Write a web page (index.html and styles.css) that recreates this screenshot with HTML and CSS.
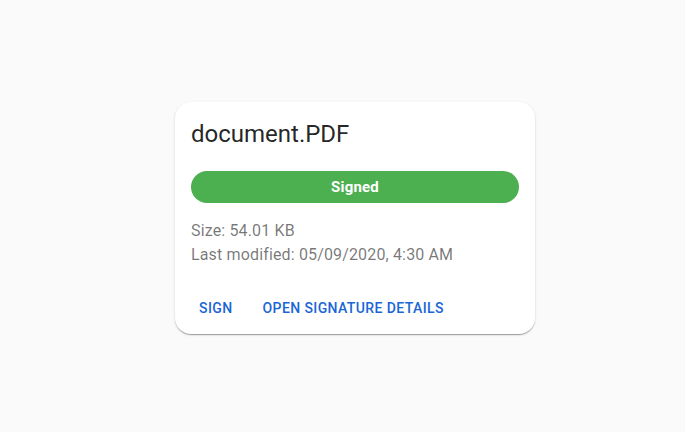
FILE: index.html
```html
<!DOCTYPE html>
<html>
<head>
<meta charset="utf-8">
<link rel="stylesheet" href="styles.css">
</head>
<body>
<div class="page">
  <div class="card">
    <div class="content">
      <h2 class="title">document.PDF</h2>
      <div class="chip">Signed</div>
      <div class="meta">
        <p>Size: 54.01 KB</p>
        <p>Last modified: 05/09/2020, 4:30 AM</p>
      </div>
    </div>
    <div class="actions">
      <button class="btn">Sign</button>
      <button class="btn">Open signature details</button>
    </div>
  </div>
</div>
</body>
</html>
```
FILE: styles.css
```css
html, body {
  margin: 0;
  padding: 0;
  background: #fafafa;
  font-family: Roboto, "Liberation Sans", sans-serif;
}
.page {
  height: 432px;
  display: flex;
  align-items: center;
  justify-content: center;
  padding-left: 25px;
  padding-top: 4px;
  box-sizing: border-box;
}
.card {
  width: 360px;
  background: #fff;
  border-radius: 16px;
  box-shadow: 0 2px 1px -1px rgba(0,0,0,0.2), 0 1px 1px 0 rgba(0,0,0,0.14), 0 1px 3px 0 rgba(0,0,0,0.12);
}
.content {
  padding: 16px;
}
.title {
  margin: 0;
  font-size: 24px;
  font-weight: 400;
  line-height: 1.334;
  color: rgba(0,0,0,0.87);
}
.chip {
  margin-top: 21px;
  height: 32px;
  border-radius: 16px;
  background: #4caf50;
  color: #fff;
  font-weight: 700;
  font-size: 15px;
  letter-spacing: 0.2px;
  display: flex;
  align-items: center;
  justify-content: center;
}
.meta {
  margin-top: 16px;
  color: rgba(0,0,0,0.54);
  font-size: 16px;
  line-height: 1.5;
  letter-spacing: 0.15px;
}
.meta p { margin: 0; }
.actions {
  display: flex;
  padding: 7px 9px 8px;
}
.btn {
  background: none;
  border: 0;
  padding: 6px 15px;
  font-family: inherit;
  font-size: 14px;
  font-weight: 500;
  letter-spacing: 0.4px;
  text-transform: uppercase;
  color: #1a66d6;
  line-height: 1.75;
}
```
